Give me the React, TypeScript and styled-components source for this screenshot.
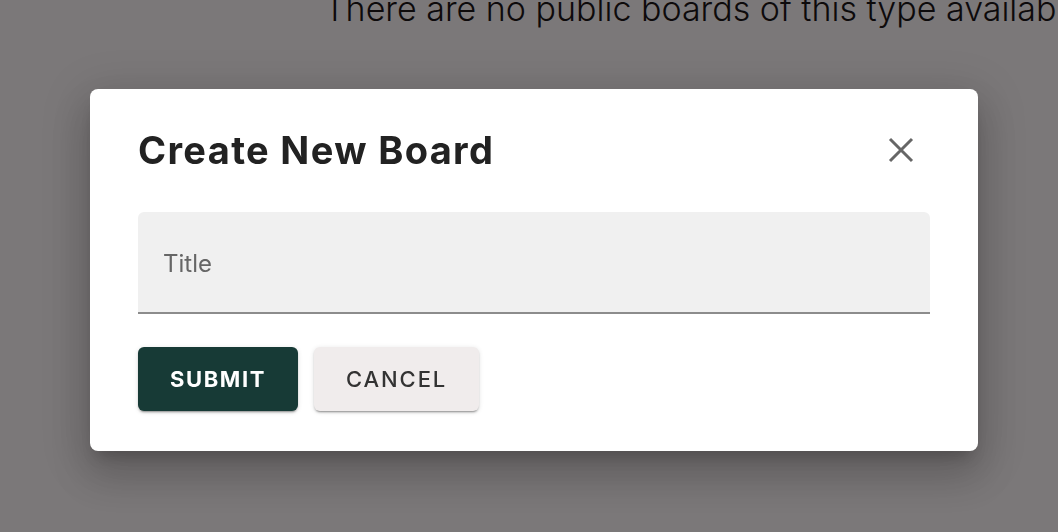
import React from 'react';
import styled, {createGlobalStyle} from 'styled-components';

const GlobalStyle = createGlobalStyle`
    html, body {
        margin: 0;
        padding: 0;
        background: #ffffff;
        font-family: Inter, 'Noto Sans', sans-serif;
    }
`;

const Page = styled.div`
    height: 532px;
    overflow: hidden;
`;

const EmptyMessage = styled.p`
    margin: -11px 0 0 324px;
    font-size: 34px;
    line-height: 40px;
    font-weight: 300;
    color: #111;
    white-space: nowrap;
`;

const Backdrop = styled.div`
    position: fixed;
    inset: 0;
    background: rgba(12, 6, 8, 0.54);
    display: flex;
    align-items: center;
    justify-content: center;
    padding: 8px 0 0 10px;
`;

const Dialog = styled.div`
    width: 888px;
    box-sizing: border-box;
    background: #fff;
    border-radius: 8px;
    padding: 28px 48px 40px;
    box-shadow: 0 11px 15px -7px rgba(0, 0, 0, 0.2), 0 24px 38px 3px rgba(0, 0, 0, 0.14),
        0 9px 46px 8px rgba(0, 0, 0, 0.12);
`;

const Header = styled.div`
    display: flex;
    align-items: center;
    justify-content: space-between;
    height: 66px;
    margin-bottom: 29px;
`;

const Title = styled.h2`
    margin: 0;
    font-size: 38px;
    font-weight: 700;
    color: #222;
    letter-spacing: 1.35px;
`;

const CloseButton = styled.button`
    width: 48px;
    height: 48px;
    margin-right: 5px;
    border: none;
    background: transparent;
    display: flex;
    align-items: center;
    justify-content: center;
    cursor: pointer;
    padding: 0;
`;

const Field = styled.div`
    height: 100px;
    background: #f0f0f0;
    border-radius: 6px 6px 0 0;
    border-bottom: 2px solid #8c8c8c;
    display: flex;
    align-items: center;
    padding: 0 25px;
    margin: 0 0 33px;
`;

const Label = styled.span`
    font-size: 24px;
    color: #666;
    margin-top: 2px;
`;

const Actions = styled.div`
    display: flex;
    gap: 16px;
`;

const ActionButton = styled.button<{$primary?: boolean}>`
    height: 64px;
    padding: 0 32px;
    border: none;
    border-radius: 6px;
    font-family: Inter, 'Noto Sans', sans-serif;
    font-size: 22px;
    font-weight: ${({$primary}) => ($primary ? 700 : 500)};
    letter-spacing: ${({$primary}) => ($primary ? '1.6px' : '1.9px')};
    background: ${({$primary}) => ($primary ? '#173a36' : '#f0ecec')};
    color: ${({$primary}) => ($primary ? '#fff' : '#333')};
    box-shadow: 0 3px 1px -2px rgba(0, 0, 0, 0.2), 0 2px 2px 0 rgba(0, 0, 0, 0.14), 0 1px 5px 0 rgba(0, 0, 0, 0.12);
    cursor: pointer;
`;

const CloseIcon = () => (
    <svg width="26" height="26" viewBox="0 0 26 26">
        <path d="M2 2 L24 24 M24 2 L2 24" stroke="#666" strokeWidth="3" />
    </svg>
);

export default function App() {
    return (
        <Page>
            <GlobalStyle />
            <EmptyMessage>There are no public boards of this type available</EmptyMessage>
            <Backdrop>
                <Dialog>
                    <Header>
                        <Title>Create New Board</Title>
                        <CloseButton aria-label="close">
                            <CloseIcon />
                        </CloseButton>
                    </Header>
                    <Field>
                        <Label>Title</Label>
                    </Field>
                    <Actions>
                        <ActionButton $primary>SUBMIT</ActionButton>
                        <ActionButton>CANCEL</ActionButton>
                    </Actions>
                </Dialog>
            </Backdrop>
        </Page>
    );
}
